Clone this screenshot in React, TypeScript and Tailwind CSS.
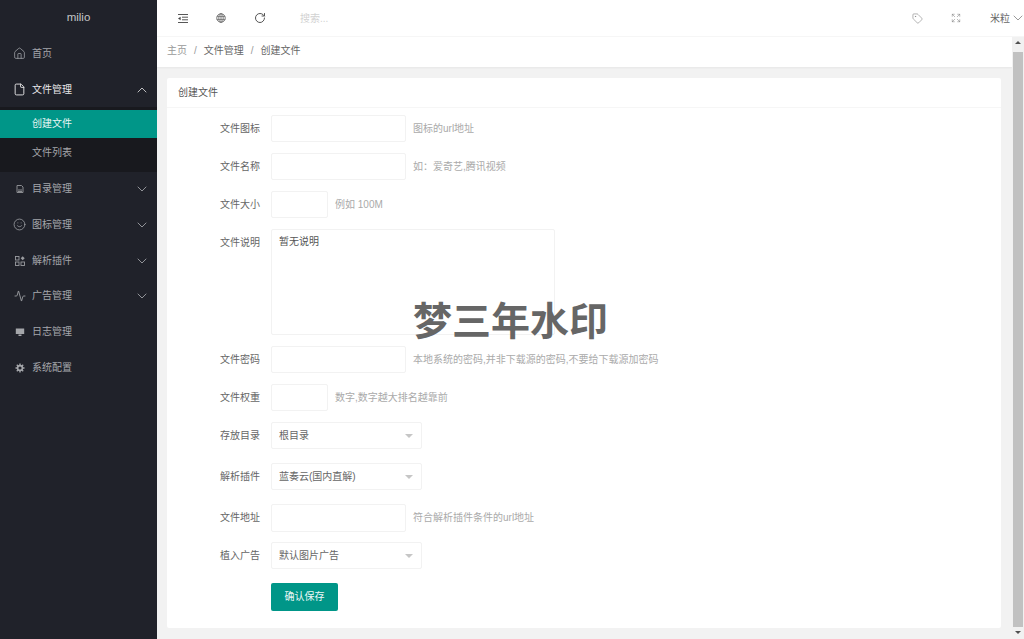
import React from 'react';
import { Activity, ChevronDown, ChevronUp, Expand, File, Home, RotateCw, Smile, Tag } from 'lucide-react';

const DirIcon = () => (
    <svg viewBox="0 0 10 10" className="w-[10px] h-[10px]" fill="none" stroke="#8a8c90" strokeWidth="1">
        <path d="M2 1.5h4.5L8 3v5.5H2z" />
        <path d="M3 6h4M3 7.5h4" />
    </svg>
);

const PluginIcon = () => (
    <svg viewBox="0 0 10 10" className="w-[10px] h-[10px]" fill="none" stroke="#9a9ca0" strokeWidth="0.9">
        <rect x="0.5" y="0.5" width="3.5" height="3.5" />
        <rect x="0.5" y="6" width="3.5" height="3.5" />
        <rect x="6" y="6" width="3.5" height="3.5" />
        <path d="M7.7.3l2 2-2 2-2-2z" fill="#9a9ca0" stroke="none" />
    </svg>
);

const LogIcon = () => (
    <svg viewBox="0 0 10 10" className="w-[10px] h-[10px]" fill="#a4a6aa">
        <path d="M0.8 1.5h8.4v5.5H0.8z" />
        <path d="M3.5 7.5h3v1.5h-3z" />
    </svg>
);

const GearIcon = () => (
    <svg viewBox="0 0 10 10" className="w-[10px] h-[10px]">
        <path d="M5 .5v2M5 7.5v2M.5 5h2M7.5 5h2M1.8 1.8l1.4 1.4M6.8 6.8l1.4 1.4M8.2 1.8L6.8 3.2M3.2 6.8L1.8 8.2" stroke="#a4a6aa" strokeWidth="1.4" />
        <circle cx="5" cy="5" r="2.4" fill="none" stroke="#a4a6aa" strokeWidth="1.6" />
    </svg>
);

const GlobeIcon = () => (
    <svg viewBox="0 0 10 10" className="w-[10px] h-[10px]" fill="none" stroke="#666" strokeWidth="0.8">
        <circle cx="5" cy="5" r="4.3" />
        <path d="M1 3.6h8M.8 6.4h8.4M5 .8v8.4" />
        <ellipse cx="5" cy="5" rx="2.2" ry="4.3" />
    </svg>
);

const MenuIcon = () => (
    <svg viewBox="0 0 10 9" className="w-[10px] h-[9px]" stroke="#444" strokeWidth="0.9">
        <path d="M0 .5h10M4 3.2h6M4 5.8h6M0 8.5h10" />
        <path d="M0 4.5l2.6-1.8v3.6z" fill="#444" stroke="none" />
    </svg>
);

const navTop = [
    { name: '首页', icon: <Home size={13} strokeWidth={1.4} /> },
];

const navBottom = [
    { name: '目录管理', icon: <DirIcon />, arrow: true },
    { name: '图标管理', icon: <Smile size={13} strokeWidth={1.4} />, arrow: true },
    { name: '解析插件', icon: <PluginIcon />, arrow: true },
    { name: '广告管理', icon: <Activity size={12} strokeWidth={1.7} />, arrow: true },
    { name: '日志管理', icon: <LogIcon /> },
    { name: '系统配置', icon: <GearIcon /> },
];

const NavRow = ({ name, icon, arrow, active }: { name: string; icon: React.ReactNode; arrow?: boolean; active?: boolean }) => (
    <div className={`h-[35.7px] flex items-center pl-[13px] pr-[7px] ${active ? 'text-[#e8e8e9]' : 'text-[#a4a6aa]'}`}>
        <span className="w-[13px] h-[13px] flex items-center justify-center mr-[6px]">{icon}</span>
        <span className="flex-1">{name}</span>
        {arrow && <ChevronDown size={16} strokeWidth={1.3} />}
    </div>
);

const Field = ({ label, hint, width, height, children, className }: { label: string; hint?: string; width?: string; height?: string; children?: React.ReactNode; className?: string }) => (
    <div className={`flex items-center ${className ?? ''}`}>
        <label className="w-[93px] mr-[11px] text-right text-[#666]">{label}</label>
        {children ?? <input className={`${height ?? 'h-[27px]'} ${width ?? 'w-[135px]'} border border-[#f2f2f2] rounded-[2px] bg-white outline-none`} />}
        {hint && <span className="ml-[7px] text-[#aaa]">{hint}</span>}
    </div>
);

const SelectBox = ({ value }: { value: string }) => (
    <div className="h-[27px] w-[151px] border border-[#f2f2f2] rounded-[2px] bg-white flex items-center pl-[7px] pr-[8px] text-[#666]">
        <span className="flex-1">{value}</span>
        <span className="w-0 h-0 border-x-[4px] border-x-transparent border-t-[4px] border-t-[#c6c6c6]" />
    </div>
);

const App: React.FC = () => {
    return (
        <div className="w-[1024px] h-[639px] overflow-hidden flex text-[10px] leading-none font-['Liberation_Sans','Noto_Sans_CJK_SC',sans-serif]">
            <aside className="w-[157px] shrink-0 bg-[#20222a]">
                <div className="h-[36px] pb-[1px] flex items-center justify-center text-[11.5px] text-[#c4c5c7]">milio</div>
                {navTop.map(item => <NavRow key={item.name} {...item} />)}
                <NavRow name="文件管理" icon={<File size={13} strokeWidth={1.7} color="#e8e8e9" />} active />
                <div className="-mt-[35.7px] h-[35.7px] flex items-center justify-end pr-[7px] text-[#d8d8d9]">
                    <ChevronUp size={16} strokeWidth={1.3} />
                </div>
                <div className="bg-[#18191e] pt-[3px] -mt-[0.5px] h-[65px]">
                    <div className="h-[28.5px] flex items-center pl-[32px] bg-[#009688] text-[#e8f5f3]">创建文件</div>
                    <div className="h-[30px] flex items-center pl-[32px] text-[#a4a6aa]">文件列表</div>
                </div>
                <div className="-mt-[0.5px]">
                    {navBottom.map(item => <NavRow key={item.name} {...item} />)}
                </div>
            </aside>

            <div className="flex-1 min-w-0 flex flex-col relative">
                <header className="h-[37px] shrink-0 bg-white border-b border-[#f6f6f6] flex items-center text-[#555]">
                    <span className="ml-[21px] w-[38px]"><MenuIcon /></span>
                    <span className="w-[39px]"><GlobeIcon /></span>
                    <span className="w-[45px]"><RotateCw size={12} strokeWidth={2} className="-ml-[1px]" /></span>
                    <span className="flex-1 mt-[2px] text-[#d2d2d2]">搜索...</span>
                    <Tag size={11} strokeWidth={1.2} className="mr-[28px] text-[#777]" />
                    <Expand size={10} strokeWidth={1.2} className="mr-[28px] text-[#777]" />
                    <span className="ml-[1px] mt-[1px] text-[#666]">米粒</span>
                    <ChevronDown size={16} strokeWidth={1} className="-ml-[0.5px] -mr-[1.5px] text-[#666]" />
                </header>

                <div className="flex-1 min-h-0 flex">
                    <main className="flex-1 min-w-0 bg-[#f2f2f2]">
                        <nav className="h-[30px] pb-[3px] bg-white shadow-[0_1px_2px_rgba(0,0,0,0.05)] flex items-center pl-[10px] text-[#666]">
                            <span className="text-[#999]">主页</span>
                            <span className="mx-[7px] text-[#999]">/</span>
                            <span>文件管理</span>
                            <span className="mx-[7px] text-[#999]">/</span>
                            <span>创建文件</span>
                        </nav>
                        <section className="mt-[11px] ml-[10px] mr-[11px] h-[550px] bg-white rounded-[2px]">
                            <div className="h-[30px] flex items-center pl-[11px] border-b border-[#f6f6f6] text-[#555]">创建文件</div>
                            <form className="pt-[7px] flex flex-col">
                                <Field label="文件图标" hint="图标的url地址" />
                                <Field label="文件名称" hint="如：爱奇艺,腾讯视频" className="mt-[11px]" />
                                <Field label="文件大小" hint="例如 100M" width="w-[57px]" className="mt-[11px]" />
                                <div className="flex items-start mt-[11px]">
                                    <label className="w-[93px] mr-[11px] mt-[9px] text-right text-[#666]">文件说明</label>
                                    <textarea
                                        defaultValue="暂无说明"
                                        className="w-[284px] h-[106px] border border-[#f2f2f2] rounded-[2px] px-[7px] py-[6px] text-[#555] leading-[12px] resize-none outline-none"
                                    />
                                </div>
                                <Field label="文件密码" hint="本地系统的密码,并非下载源的密码,不要给下载源加密码" className="mt-[11px]" />
                                <Field label="文件权重" hint="数字,数字越大排名越靠前" width="w-[57px]" className="mt-[11px]" />
                                <Field label="存放目录" className="mt-[11px]"><SelectBox value="根目录" /></Field>
                                <Field label="解析插件" className="mt-[14px]"><SelectBox value="蓝奏云(国内直解)" /></Field>
                                <Field label="文件地址" hint="符合解析插件条件的url地址" height="h-[28px]" className="mt-[14px]" />
                                <Field label="植入广告" className="mt-[10px]"><SelectBox value="默认图片广告" /></Field>
                                <button type="button" className="mt-[14px] ml-[104px] w-[67px] h-[28px] rounded-[2px] bg-[#009688] text-[#eef8f7] text-[10px]">确认保存</button>
                            </form>
                        </section>
                    </main>
                    <div className="w-[12px] shrink-0 bg-[#f1f1f1] flex flex-col items-center">
                        <span className="mt-[4px] w-0 h-0 border-x-[3px] border-x-transparent border-b-[3px] border-b-[#505050]" />
                        <div className="mt-[8px] w-[10px] h-[575px] bg-[#c1c1c1]" />
                        <span className="mt-[4px] w-0 h-0 border-x-[3px] border-x-transparent border-t-[3px] border-t-[#505050]" />
                    </div>
                </div>

                <div className="absolute left-[256px] top-[298px] text-[39px] leading-[48px] font-bold text-[#666] whitespace-nowrap pointer-events-none">梦三年水印</div>
            </div>
        </div>
    );
};

export default App;
